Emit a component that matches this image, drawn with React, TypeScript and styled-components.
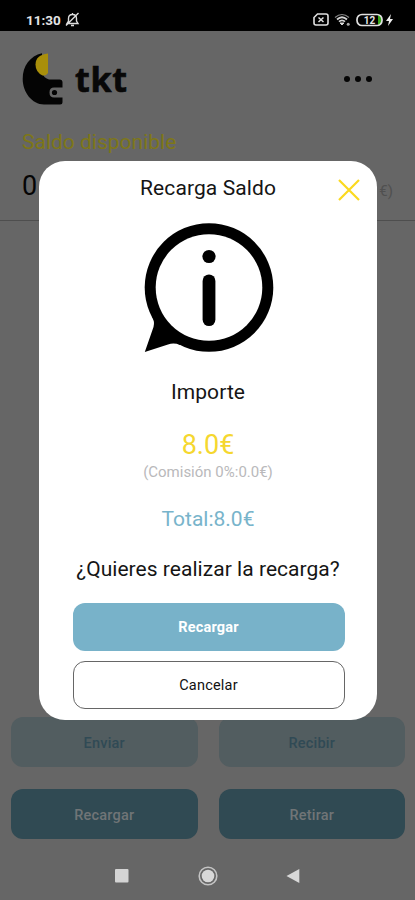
import React from 'react';
import styled, { createGlobalStyle } from 'styled-components';

const Global = createGlobalStyle`
  * { box-sizing: border-box; }
  body { margin: 0; background: #666; }
`;

const Screen = styled.div`
  position: relative;
  width: 415px;
  height: 900px;
  display: flex;
  flex-direction: column;
  overflow: hidden;
  background: #666666;
  font-family: Roboto, 'Liberation Sans', sans-serif;
  color: #050505;
`;

const StatusBar = styled.div`
  height: 31px;
  flex: none;
  display: flex;
  align-items: center;
  justify-content: space-between;
  padding: 8px 21px 0 26px;
  background: #000;
  color: #e4e4e4;
`;

const StatusGroup = styled.div<{ $gap: number }>`
  display: flex;
  align-items: center;
  gap: ${(p) => p.$gap}px;
`;

const Clock = styled.span`
  font: 700 13.5px/16px Roboto, sans-serif;
  width: 35px;
  white-space: nowrap;
`;

const Header = styled.header`
  height: 96px;
  flex: none;
  display: flex;
  align-items: center;
  justify-content: space-between;
  padding: 0 42px 0 22px;
`;

const Brand = styled.div`
  display: flex;
  align-items: center;
  gap: 12px;
`;

const BrandName = styled.span`
  font: 700 34px/40px 'Open Sans', 'Noto Sans', sans-serif;
  letter-spacing: 0.7px;
  -webkit-text-stroke: 0.7px #080808;
  color: #080808;
`;

const Balance = styled.section`
  height: 94px;
  flex: none;
  display: flex;
  flex-direction: column;
  padding: 0 22px 0 22px;
  border-bottom: 1px solid #4e4e4e;
`;

const BalanceLabel = styled.div`
  font-size: 21px;
  line-height: 30px;
  letter-spacing: 0;
  color: #7e7718;
`;

const BalanceRow = styled.div`
  display: flex;
  align-items: center;
  justify-content: space-between;
  height: 38px;
  margin-top: 10px;
  font-size: 27px;
`;

const Fee = styled.span`
  font-size: 15px;
  color: #505050;
  padding-top: 10px;
`;

const Actions = styled.div`
  margin-top: auto;
  display: grid;
  grid-template-columns: 1fr 1fr;
  grid-auto-rows: 50px;
  gap: 22px 21px;
  padding: 0 10px 0 11px;
`;

const Action = styled.button<{ $soft?: boolean }>`
  border: 0;
  border-radius: 12px;
  background: ${(p) => (p.$soft ? '#525d60' : '#304a53')};
  color: ${(p) => (p.$soft ? '#304a55' : '#707577')};
  font: 500 14.5px/20px Roboto, sans-serif;
  letter-spacing: 0.2px;
  padding: 3px 0 0;
`;

const NavBar = styled.nav`
  height: 61px;
  flex: none;
  display: flex;
  justify-content: space-between;
  align-items: center;
  padding: 12px 115px 0 114px;
`;

const Dialog = styled.div`
  position: absolute;
  left: 39px;
  top: 161px;
  width: 338px;
  height: 559px;
  display: flex;
  flex-direction: column;
  align-items: center;
  border-radius: 26px;
  background: #fff;
`;

const DialogHead = styled.div`
  width: 100%;
  height: 54px;
  display: grid;
  grid-template-columns: 54px 1fr 54px;
  align-items: center;
  text-align: center;
`;

const Title = styled.h1`
  grid-column: 2;
  margin: 0;
  font-weight: 400;
  font-size: 21px;
  letter-spacing: 0.1px;
  color: #151515;
`;

const Close = styled.button`
  border: 0;
  padding: 3px 0 0 14px;
  background: none;
  display: flex;
`;

const InfoArt = styled.svg`
  flex: none;
  margin: 8px 0 0 1px;
`;

const Line = styled.div<{ $size: number; $height: number; $top: number; $color: string; $track?: number }>`
  margin-top: ${(p) => p.$top}px;
  height: ${(p) => p.$height}px;
  line-height: ${(p) => p.$height}px;
  font-size: ${(p) => p.$size}px;
  color: ${(p) => p.$color};
  letter-spacing: ${(p) => p.$track ?? 0}px;
  white-space: nowrap;
`;

const DialogActions = styled.div`
  width: 272px;
  display: grid;
  grid-auto-rows: 48px;
  gap: 10px;
  margin: 18px 0 0 1px;
`;

const DialogButton = styled.button<{ $primary?: boolean }>`
  border: ${(p) => (p.$primary ? '0' : '1px solid #666')};
  border-radius: 12px;
  background: ${(p) => (p.$primary ? '#78b2c9' : '#fff')};
  color: ${(p) => (p.$primary ? '#fff' : '#111')};
  font: ${(p) => (p.$primary ? 700 : 400)} 14.5px/20px Roboto, sans-serif;
  letter-spacing: 0.2px;
  padding: 2px 0 0;
`;

const App = () => (
  <>
    <Global />
    <Screen>
      <StatusBar>
        <StatusGroup $gap={4}>
          <Clock>11:30</Clock>
          <svg width="15" height="15" viewBox="0 0 15 15" fill="none" stroke="#ddd" strokeWidth="1.4">
            <path d="M2 11.5h11L11.5 9V6.5C11.5 4 10 2.5 7.5 2.5S3.5 4 3.500 6.500V9zM6 13.500h3M7.500 1v1.500M1 13.500L13.500 1" />
          </svg>
        </StatusGroup>
        <StatusGroup $gap={5}>
          <svg width="16" height="13" viewBox="0 0 16 13" fill="none" stroke="#e0e0e0">
            <path d="M4.5 1H13q2 0 2 2v7q0 2-2 2H3q-2 0-2-2V4.500z" strokeWidth="1.6" />
            <path d="M5.500 4.500l5 4.500M10.500 4.500l-5 4.500" strokeWidth="1.5" />
          </svg>
          <svg width="17" height="14" viewBox="0 0 17 14" fill="none" stroke="#d5d5d5">
            <path d="M1 4.500Q8 -1.500 15 4.500" strokeWidth="1.2" stroke="#888" />
            <path d="M3 6.500Q8 2 13 6.500M5 8.700Q8 6 11 8.700" strokeWidth="1.8" />
            <path d="M6 10l2 2 2-2z" fill="#ddd" />
            <circle cx="14.200" cy="11.200" r="1.500" fill="#aaa" stroke="none" />
          </svg>
          <svg width="38" height="14" viewBox="0 0 38 14">
            <path d="M22 2h1.500q2.500 1.500 2.500 5t-2.500 5H22z" fill="#38a91c" />
            <rect x="1" y="1.500" width="25" height="11" rx="5" fill="none" stroke="#e0e0e0" strokeWidth="1.700" />
            <text x="13.500" y="10.800" textAnchor="middle" fontFamily="Roboto" fontSize="10" fontWeight="700" fill="#e5e5e5">12</text>
            <path d="M35 1l-5 7h3l-1 5 5-7h-3z" fill="#eee" />
          </svg>
        </StatusGroup>
      </StatusBar>
      <Header>
        <Brand>
          <svg width="41" height="53" viewBox="0 0 41 53">
            <path d="M20 .3C8 3 .7 13 .7 26S10 51.500 22 51.500H38q2.500 0 2.500-2.500V44.500H32q-4.500 0-4.500-5t4.500-5h8.500V29.500q0-3-3-3H27Q22 25 20 20z" fill="#040404" />
            <path d="M26 .5V20Q24 23 20.500 22.500 13.500 19 13.500 11.500 13.500 2 26 .5z" fill="#a98f0b" />
            <circle cx="32.500" cy="39.500" r="2.600" fill="#040404" />
          </svg>
          <BrandName>tkt</BrandName>
        </Brand>
        <svg width="30" height="8" viewBox="0 0 30 8" fill="#050505">
          <circle cx="4" cy="4" r="3" />
          <circle cx="15" cy="4" r="3" />
          <circle cx="26" cy="4" r="3" />
        </svg>
      </Header>
      <Balance>
        <BalanceLabel>Saldo disponible</BalanceLabel>
        <BalanceRow>
          <span>0</span>
          <Fee>€)</Fee>
        </BalanceRow>
      </Balance>
      <Actions>
        <Action $soft>Enviar</Action>
        <Action $soft>Recibir</Action>
        <Action>Recargar</Action>
        <Action>Retirar</Action>
      </Actions>
      <NavBar>
        <svg width="15" height="15" viewBox="0 0 15 15">
          <rect x="1" y="1" width="13.500" height="13.500" rx="1" fill="#d4d4d4" />
        </svg>
        <svg width="20" height="20" viewBox="0 0 20 20">
          <circle cx="10" cy="10" r="8.800" fill="none" stroke="#c4c4c4" strokeWidth="1.600" />
          <circle cx="10" cy="10" r="6.300" fill="#d8d8d8" />
        </svg>
        <svg width="14" height="16" viewBox="0 0 14 16">
          <path d="M.5 8L13.300 1v14z" fill="#d8d8d8" />
        </svg>
      </NavBar>
      <Dialog role="dialog">
        <DialogHead>
          <Title>Recarga Saldo</Title>
          <Close aria-label="Cerrar">
            <svg width="24" height="24" viewBox="0 0 24 24" fill="none" stroke="#fbd91f" strokeWidth="2.200">
              <path d="M2 2l20 20M22 2L2 22" />
            </svg>
          </Close>
        </DialogHead>
        <InfoArt width="130" height="130" viewBox="0 0 130 130">
          <circle cx="65" cy="64.500" r="64.300" fill="#000" />
          <path d="M.8 129L9.500 104Q11 99 8 93L40 116 36 122Q30 119.500 24 121.500Z" fill="#000" />
          <circle cx="65" cy="64.500" r="53.300" fill="#fff" />
          <circle cx="65" cy="33.500" r="6.600" fill="#000" />
          <rect x="58.600" y="51.500" width="12.800" height="51.500" rx="6.400" fill="#000" />
        </InfoArt>
        <Line $size={21} $height={36} $top={21} $color="#151515" $track={0.1}>Importe</Line>
        <Line $size={27} $height={30} $top={20} $color="#f5d72f">8.0€</Line>
        <Line $size={15} $height={20} $top={2} $color="#b9b9bb">(Comisión 0%:0.0€)</Line>
        <Line $size={21} $height={28} $top={23} $color="#78b4cb">Total:8.0€</Line>
        <Line $size={21} $height={32} $top={20} $color="#151515" $track={0.04}>¿Quieres realizar la recarga?</Line>
        <DialogActions>
          <DialogButton $primary>Recargar</DialogButton>
          <DialogButton>Cancelar</DialogButton>
        </DialogActions>
      </Dialog>
    </Screen>
  </>
);

export default App;
